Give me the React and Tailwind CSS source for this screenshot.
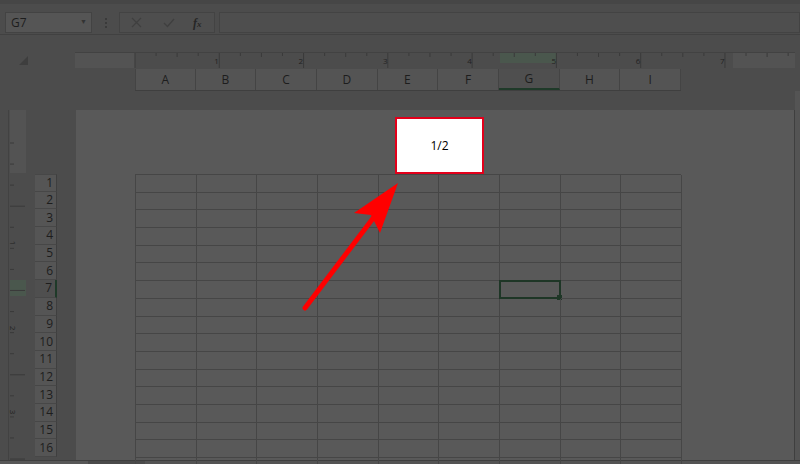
import React from 'react';

const cols = ['A', 'B', 'C', 'D', 'E', 'F', 'G', 'H', 'I'];
const rows = Array.from({ length: 17 }, (_, i) => i + 1);
const rulerNums = [1, 2, 3, 4, 5, 6, 7];

const TopRuler = () => (
    <div className="relative h-[17px] flex-1 border-t border-[#424242]">
        {/* margins */}
        <div className="absolute left-0 top-0 h-[15px] w-[60px] bg-[#535353]" />
        <div className="absolute right-0 top-0 h-[15px] w-[62px] bg-[#535353]" />
        {/* selected column highlight */}
        <div className="absolute left-[425px] top-0 h-[10px] w-[57px] bg-[#4a574d]" />
        <svg className="absolute inset-0" width="720" height="17">
            {Array.from({ length: 34 }, (_, i) => {
                const x = 60 + i * 21.07;
                const major = i % 4 === 0;
                return <line key={i} x1={x} y1="0" x2={x} y2={major ? 15 : i % 2 === 0 ? 4 : 3} stroke="#3a3a3a" strokeWidth="1" />;
            })}
        </svg>
        {rulerNums.map((n) => (
            <span
                key={n}
                className="absolute top-[4px] text-[8px] leading-none text-[#222]"
                style={{ left: 60 + n * 84.3 - 5 }}
            >
                {n}
            </span>
        ))}
    </div>
);

const LeftRuler = () => (
    <div className="relative w-[20px] border-l border-[#424242]">
        <div className="absolute left-[1px] top-0 h-[63px] w-[16px] bg-[#535353]" />
        <div className="absolute left-[1px] top-[170px] h-[16px] w-[16px] bg-[#4a574d]" />
        <svg className="absolute inset-0" width="20" height="350">
            {Array.from({ length: 17 }, (_, i) => {
                const y = 33 + i * 21.07;
                const major = (i + 1) % 4 === 0;
                return <line key={i} x1="1" y1={y} x2={major ? 16 : 5} y2={y} stroke="#3a3a3a" strokeWidth="1" />;
            })}
        </svg>
        {[1, 2, 3].map((n) => (
            <span
                key={n}
                className="absolute left-[2px] rotate-90 text-[8px] leading-none text-[#222]"
                style={{ top: 63 + n * 84.3 - 18 }}
            >
                {n}
            </span>
        ))}
    </div>
);

const App = () => {
    return (
        <div className="relative flex h-[464px] w-[800px] flex-col overflow-hidden bg-[#4c4c4c] font-['Open_Sans','Liberation_Sans',sans-serif] text-[#1d1d1d]">
            {/* formula bar */}
            <div className="h-[4px] shrink-0 bg-[#464646]" />
            <div className="flex h-[31px] shrink-0 items-start border-b border-[#414141] pl-[5px] pt-[8px]">
                <div className="flex h-[21px] w-[87px] items-center justify-between border border-[#434343] bg-[#555555] pl-[5px] pr-[4px] text-[12px]">
                    <span>G7</span>
                    <span className="text-[7px] text-[#333]">▼</span>
                </div>
                <div className="ml-[13px] flex h-[21px] flex-col items-center justify-center gap-[2px]">
                    <span className="h-[2px] w-[2px] bg-[#3a3a3a]" />
                    <span className="h-[2px] w-[2px] bg-[#3a3a3a]" />
                    <span className="h-[2px] w-[2px] bg-[#3a3a3a]" />
                </div>
                <div className="ml-[12px] flex h-[21px] w-[96px] items-center border border-[#434343] bg-[#4e4e4e] pl-[10px]">
                    <svg width="11" height="11" viewBox="0 0 11 11" className="ml-[1px]">
                        <path d="M1 1 L10 10 M10 1 L1 10" stroke="#3f3f3f" strokeWidth="1.2" />
                    </svg>
                    <svg width="12" height="10" viewBox="0 0 12 10" className="ml-[21px]">
                        <path d="M1 5 L4.5 8.5 L11 1" fill="none" stroke="#3f3f3f" strokeWidth="1.3" />
                    </svg>
                    <span className="ml-[18px] font-['Liberation_Serif',serif] text-[12px] font-bold italic text-[#262626]">
                        f<span className="text-[9px]">x</span>
                    </span>
                </div>
                <div className="ml-[4px] h-[21px] flex-1 border border-[#434343] bg-[#4e4e4e]" />
            </div>

            {/* ruler + column headers */}
            <div className="h-[17px] shrink-0" />
            <div className="flex h-[17px] shrink-0">
                <div className="relative w-[75px]">
                    <svg className="absolute left-[19px] top-[4px]" width="10" height="10">
                        <polygon points="9,0 9,9 0,9" fill="#3e3e3e" />
                    </svg>
                </div>
                <TopRuler />
                <div className="w-[5px]" />
            </div>
            <div className="flex h-[22px] shrink-0">
                <div className="w-[135px]" />
                <div className="grid grid-cols-[repeat(9,60.67px)] border-b border-[#3f3f3f]">
                    {cols.map((c) => (
                        <div
                            key={c}
                            className={`flex items-center justify-center border-r border-[#444] text-[12px] ${
                                c === 'G' ? 'border-b-2 border-b-[#1f3a29] bg-[#4f4f4f]' : 'bg-[#545454]'
                            } ${c === 'A' ? 'border-l' : ''}`}
                        >
                            {c}
                        </div>
                    ))}
                </div>
            </div>

            {/* body */}
            <div className="flex min-h-0 flex-1">
                <div className="flex w-[76px] shrink-0 pl-[8px] pt-[19px]">
                    <LeftRuler />
                    <div className="ml-[7px] mt-[64px] w-[22px]">
                        {rows.slice(0, 16).map((r) => (
                            <div
                                key={r}
                                className={`flex h-[17.7px] items-center justify-end border-b border-[#474747] pr-[3px] text-[12px] ${
                                    r === 7 ? 'border-r-2 border-r-[#1f3a29] bg-[#4f4f4f]' : 'border-r border-r-[#3f3f3f] bg-[#555555]'
                                } ${r === 1 ? 'border-t' : ''}`}
                            >
                                {r}
                            </div>
                        ))}
                    </div>
                </div>

                {/* page */}
                <div className="mt-[19px] flex-1 border-r border-[#3f3f3f] bg-[#595959]">
                    <div className="ml-[319px] mt-[7px] flex h-[57px] w-[89px] items-center justify-center border-2 border-[#e3001b] bg-white text-[12px] text-black">
                        1/2
                    </div>
                    <div className="relative ml-[59px] grid w-[546px] grid-cols-[repeat(9,60.67px)] border-l border-t border-[#464646]">
                        {rows.map((r) =>
                            cols.map((c) => (
                                <div key={`${c}${r}`} className="relative h-[17.7px] border-b border-r border-[#464646]">
                                    {r === 7 && c === 'G' && (
                                        <div className="absolute -left-px -top-px h-[19px] w-[62px] border-2 border-[#1e3626]">
                                            <div className="absolute -bottom-[3px] -right-[3px] h-[5px] w-[5px] bg-[#1e3626]" />
                                        </div>
                                    )}
                                </div>
                            ))
                        )}
                    </div>
                </div>
                <div className="w-[5px] shrink-0 bg-[#545454]" />
            </div>

            {/* sheet tabs edge */}
            <div className="flex h-[4px] shrink-0 border-t border-[#3e3e3e]">
                <div className="w-[88px] bg-[#575757]" />
                <div className="w-[57px] bg-[#4a4a4a]" />
                <div className="flex-1 bg-[#535353]" />
            </div>

            {/* red arrow annotation */}
            <svg className="pointer-events-none absolute inset-0" width="800" height="464">
                <line x1="305" y1="308" x2="374" y2="217" stroke="#ff0000" strokeWidth="5" strokeLinecap="round" />
                <polygon points="398,183 354,213 371,215 380,233" fill="#ff0000" />
            </svg>
        </div>
    );
};

export default App;
